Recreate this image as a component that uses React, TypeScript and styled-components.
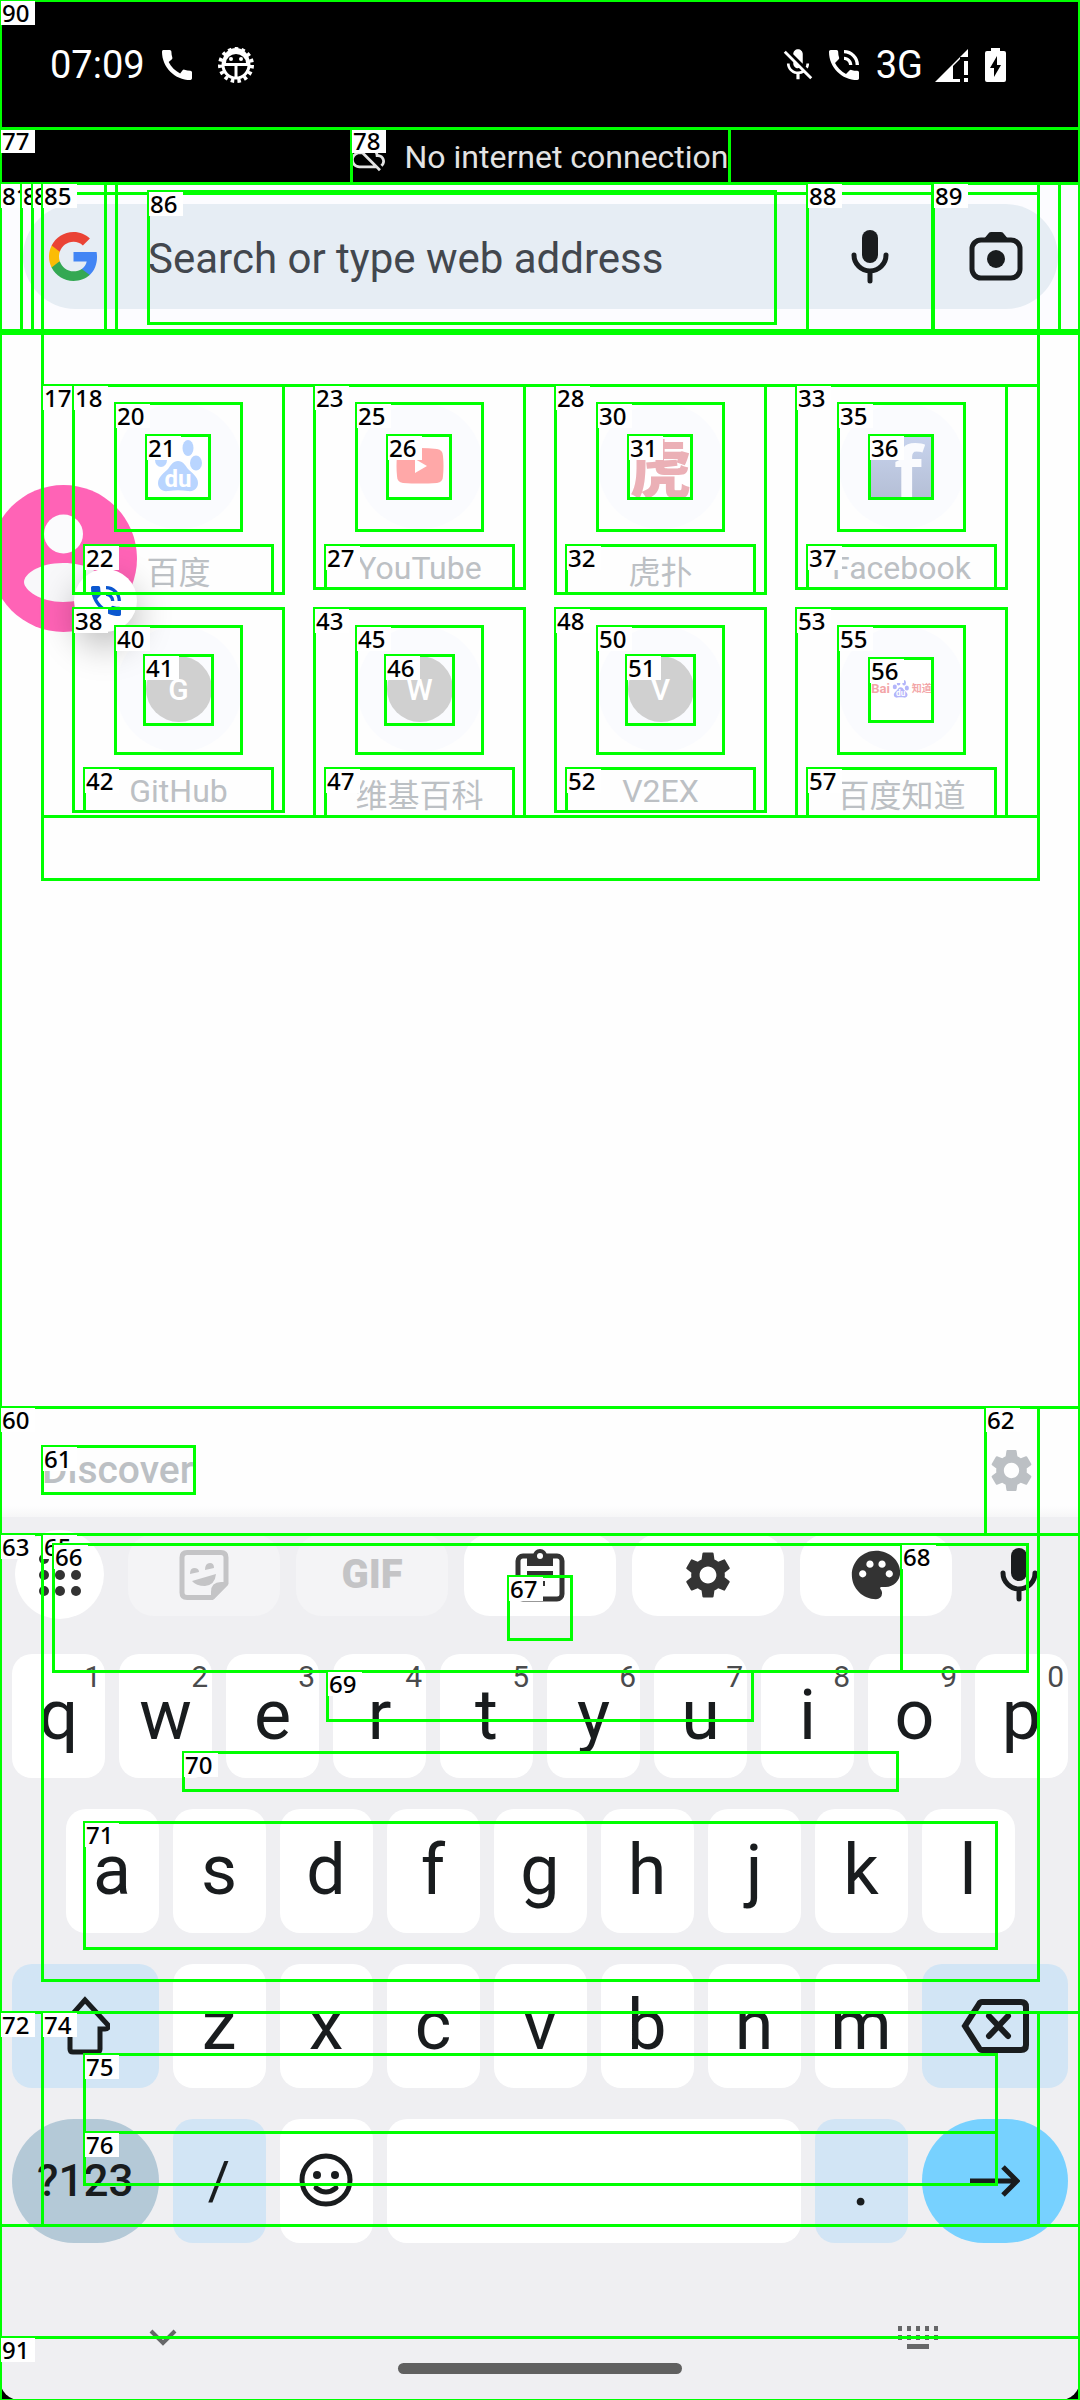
import React from "react";
import styled, { createGlobalStyle } from "styled-components";
import {
  MdCall,
  MdMicOff,
  MdPhoneInTalk,
  MdSettings,
  MdPalette,
  MdOutlineCloudOff,
} from "react-icons/md";

const SANS = `Roboto, "Noto Sans CJK SC", sans-serif`;

const GlobalStyle = createGlobalStyle`
  * { box-sizing: border-box; }
  body { margin: 0; background: #000; font-family: ${SANS}; }
  button { border: 0; padding: 0; background: none; font: inherit; color: inherit; cursor: pointer; }
  svg { display: block; flex: none; }
`;

const Page = styled.div`
  position: relative;
  display: flex;
  flex-direction: column;
  min-height: 100vh;
  overflow: hidden;
`;

/* Status bar */
const StatusBar = styled.header`
  display: flex;
  align-items: center;
  justify-content: space-between;
  height: 128px;
  padding: 2px 74px 0 50px;
  background: #000;
  color: #fff;
  font-size: 38px;
  line-height: 44px;
`;
const StatusGroup = styled.div<{ $gap: number }>`
  display: flex;
  align-items: center;
  gap: ${(p) => p.$gap}px;
`;
const OfflineBar = styled.div`
  display: flex;
  align-items: center;
  justify-content: center;
  gap: 19px;
  height: 55px;
  padding-top: 2px;
  background: #000;
  color: #e3e3e3;
  font-size: 32px;
  line-height: 40px;
`;

/* Search header */
const Header = styled.div`
  display: flex;
  align-items: flex-start;
  height: 150px;
  padding: 21px 22px 0 23px;
  background: #fcfcff;
`;
const Omnibox = styled.form`
  display: flex;
  align-items: center;
  flex: 1;
  height: 105px;
  padding: 0 35px 0 26px;
  border-radius: 53px;
  background: #e6edf4;
  color: #191c1e;
`;
const SearchInput = styled.input`
  flex: 1;
  min-width: 0;
  height: 100%;
  margin-left: 50px;
  padding: 3px 0 0;
  border: 0;
  outline: 0;
  background: transparent;
  color: #42474e;
  font-family: ${SANS};
  font-size: 42px;
  &::placeholder { color: #42474e; opacity: 1; }
`;
const IconButton = styled.button<{ $wide?: boolean }>`
  display: flex;
  align-items: center;
  justify-content: ${(p) => (p.$wide ? "center" : "flex-end")};
  width: ${(p) => (p.$wide ? 126 : 90)}px;
  height: 100%;
`;

/* Content */
const Content = styled.main`
  position: relative;
  display: flex;
  flex-direction: column;
  flex: 1;
  background: #fefefe;
`;
const TileGrid = styled.nav`
  display: grid;
  grid-template-columns: repeat(4, 1fr);
  grid-auto-rows: 223px;
  padding: 70px 58px 0;
`;
const Tile = styled.a`
  display: flex;
  flex-direction: column;
  align-items: center;
  color: #bcc0c4;
  text-decoration: none;
`;
const TileCircle = styled.span`
  display: flex;
  align-items: center;
  justify-content: center;
  width: 126px;
  height: 126px;
  border-radius: 50%;
  background: #fafbfe;
`;
const TileIcon = styled.span`
  display: flex;
  align-items: center;
  justify-content: center;
  width: 64px;
  height: 64px;
  background: #fff;
`;
const Monogram = styled.span`
  display: flex;
  align-items: center;
  justify-content: center;
  width: 66px;
  height: 66px;
  border-radius: 50%;
  background: #d0d0d0;
  color: #fff;
  font-size: 30px;
  font-weight: 500;
`;
const TigerMark = styled.span`
  color: #ebb0b6;
  font-family: "Noto Sans CJK SC", sans-serif;
  font-size: 62px;
  font-weight: 900;
  line-height: 64px;
`;
const ZhidaoMark = styled.span`
  display: flex;
  align-items: center;
  color: #f3a6a8;
  font-size: 13px;
  font-weight: 700;
  line-height: 16px;
`;
const ZhidaoText = styled.span`
  font-size: 10px;
`;
const TileLabel = styled.span<{ $cjk: boolean }>`
  margin-top: 16px;
  font-size: 32px;
  line-height: ${(p) => (p.$cjk ? 56 : 46)}px;
  white-space: nowrap;
`;
const DiscoverRow = styled.section`
  display: flex;
  align-items: center;
  justify-content: space-between;
  height: 110px;
  margin-top: auto;
  padding: 16px 43px 0 42px;
  background: linear-gradient(#fefefe 90%, #f6f6f7);
  color: #bcc0c4;
`;
const DiscoverTitle = styled.h2`
  margin: 0;
  font-size: 39px;
  font-weight: 500;
  line-height: 44px;
`;

/* Floating caller bubble, half off the left edge */
const Bubble = styled.div`
  position: absolute;
  left: -10px;
  top: 152px;
  width: 147px;
  height: 147px;
`;
const BubbleBadge = styled.span`
  position: absolute;
  right: 0;
  bottom: 0;
  display: flex;
  align-items: center;
  justify-content: center;
  width: 63px;
  height: 63px;
  border-radius: 50%;
  background: #fff;
  color: #0b57d0;
  box-shadow: 0 14px 36px rgba(0, 0, 0, 0.28);
`;

/* Keyboard */
const Keyboard = styled.section`
  padding: 13px 0 26px;
  border-radius: 0 0 20px 20px;
  background: #efeff2;
  color: #191c1e;
`;
const Toolbar = styled.div`
  display: flex;
  align-items: center;
  gap: 16px;
  padding: 0 10px 0 15px;
  color: #333;
`;
const AppsButton = styled.button`
  display: flex;
  align-items: center;
  justify-content: center;
  width: 89px;
  height: 89px;
  margin-right: 8px;
  border-radius: 50%;
  background: #fff;
`;
const ToolButton = styled.button`
  display: flex;
  align-items: center;
  justify-content: center;
  flex: 1;
  height: 82px;
  border-radius: 26px;
  background: #fff;
  font-size: 40px;
  font-weight: 900;
  &:disabled { background: #f4f4f6; color: #c4c4c6; }
`;
const VoiceButton = styled.button`
  display: flex;
  align-items: center;
  justify-content: center;
  width: 102px;
  height: 82px;
  color: #191c1e;
`;
const Keys = styled.div`
  display: grid;
  grid-template-columns: repeat(20, minmax(0, 1fr));
  grid-auto-rows: 124px;
  gap: 31px 14px;
  padding: 35px 12px 0;
`;
const keyColors = { plain: "#fff", soft: "#d2e5f5", dim: "#b4c9d7", go: "#77d1ff" };
type KeyTone = keyof typeof keyColors;
const Key = styled.button<{ $tone: KeyTone; $span: number; $start?: number; $size?: number }>`
  position: relative;
  display: flex;
  align-items: center;
  justify-content: center;
  grid-column: ${(p) => p.$start ?? "auto"} / span ${(p) => p.$span};
  padding-bottom: ${(p) => (p.$tone === "plain" ? 3 : 0)}px;
  border-radius: ${(p) => (p.$tone === "dim" || p.$tone === "go" ? 62 : 20)}px;
  background: ${(p) => keyColors[p.$tone]};
  font-size: ${(p) => p.$size ?? 70}px;
  font-weight: ${(p) => (p.$tone === "dim" ? 500 : 400)};
  line-height: 82px;
`;
const Hint = styled.span`
  position: absolute;
  top: 7px;
  right: 4px;
  color: #4a4b4d;
  font-size: 30px;
  font-weight: 400;
  line-height: 32px;
`;
const NavRow = styled.div`
  display: flex;
  justify-content: space-between;
  padding: 80px 141px 0 149px;
  color: #666769;
`;
const HomeBar = styled.div`
  width: 284px;
  height: 11px;
  margin: 12px auto 0;
  border-radius: 6px;
  background: #606060;
`;

/* Element outlines with their index numbers */
const OutlineLayer = styled.div`
  position: absolute;
  inset: 0;
  overflow: hidden;
  pointer-events: none;
`;
const Outline = styled.div`
  position: absolute;
  border: 3px solid #00ff00;
`;
const OutlineTag = styled.span`
  position: absolute;
  left: -1px;
  top: -1px;
  width: 34px;
  height: 24px;
  padding-left: 1px;
  background: #fff;
  color: #000;
  font-family: "Noto Sans", sans-serif;
  font-size: 24px;
  font-weight: 500;
  line-height: 24px;
`;

type Box = [string, number, number, number, number];

const columns = [0, 241, 482, 723];
const tileBoxes = (first: number, row: number): Box[] =>
  columns.flatMap((dx, i) => {
    const n = first + i * 5;
    const dy = row * 223;
    const letter = row === 1 && i < 3;
    const cjk = row === 0 ? i === 0 || i === 2 : i === 1 || i === 3;
    const bottom = (cjk ? 593 : 588) + dy;
    const icon: Box = letter
      ? [`${n + 3}`, 144 + dx, 655, 213 + dx, 724]
      : [`${n + 3}`, 146 + dx, 435 + dy, 210 + dx, 498 + dy];
    return [
      [`${n}`, 73 + dx, 385 + dy, 284 + dx, bottom],
      [`${n + 2}`, 115 + dx, 403 + dy, 242 + dx, 530 + dy],
      icon,
      [`${n + 4}`, 84 + dx, 545 + dy, 273 + dx, bottom],
    ] as Box[];
  });

const boxes: Box[] = [
  ["", 0, 0, 1080, 2400],
  ["", 0, 333, 1080, 2400],
  ["", 42, 193, 1039, 879],
  ["17", 42, 385, 1039, 816],
  ...tileBoxes(18, 0),
  ...tileBoxes(38, 1),
  ["60", 0, 1407, 1080, 1534],
  ["61", 42, 1446, 195, 1493],
  ["62", 985, 1407, 1039, 1534],
  ["63", 0, 1534, 1080, 2012],
  ["65", 42, 1534, 1039, 1980],
  ["66", 53, 1544, 1028, 1671],
  ["67", 508, 1576, 572, 1639],
  ["68", 901, 1544, 1028, 1671],
  ["69", 327, 1671, 753, 1720],
  ["70", 183, 1752, 898, 1790],
  ["71", 84, 1822, 997, 1948],
  ["72", 0, 2012, 1080, 2225],
  ["74", 42, 2012, 1039, 2225],
  ["75", 84, 2054, 997, 2132],
  ["76", 84, 2132, 997, 2184],
  ["77", 0, 128, 1080, 183],
  ["78", 351, 128, 730, 183],
  ["81", 0, 183, 1080, 330],
  ["82", 21, 183, 1060, 330],
  ["83", 32, 183, 1039, 330],
  ["85", 42, 183, 106, 330],
  ["", 116, 183, 1039, 330],
  ["86", 148, 191, 776, 323],
  ["88", 807, 183, 933, 330],
  ["89", 933, 183, 1039, 330],
  ["90", 0, 0, 1080, 128],
  ["91", 0, 2337, 1080, 2400],
];

const GoogleLogo = () => (
  <svg width="49" height="49" viewBox="1 1 22 22" aria-hidden="true">
    <path fill="#4285F4" d="M22.56 12.25c0-.78-.07-1.53-.2-2.25H12v4.26h5.92c-.26 1.37-1.04 2.53-2.21 3.31v2.77h3.57c2.08-1.92 3.28-4.74 3.28-8.09z" />
    <path fill="#34A853" d="M12 23c2.97 0 5.46-.98 7.28-2.66l-3.57-2.77c-.98.66-2.23 1.06-3.71 1.06-2.86 0-5.29-1.93-6.16-4.53H2.18v2.84C3.99 20.53 7.7 23 12 23z" />
    <path fill="#FBBC05" d="M5.84 14.09c-.22-.66-.35-1.36-.35-2.09s.13-1.43.35-2.09V7.07H2.18C1.43 8.55 1 10.22 1 12s.43 3.45 1.18 4.93l2.85-2.22.81-.62z" />
    <path fill="#EA4335" d="M12 5.38c1.62 0 3.06.56 4.21 1.64l3.15-3.15C17.45 2.09 14.97 1 12 1 7.7 1 3.99 3.47 2.18 7.07l3.66 2.84c.87-2.6 3.3-4.53 6.16-4.53z" />
  </svg>
);

const MicIcon = () => (
  <svg width="38" height="54" viewBox="0 0 38 54" aria-hidden="true">
    <rect x="11" y="0" width="16" height="33" rx="8" fill="currentColor" />
    <path d="M3 25a16 16 0 0 0 32 0M19 41v10" fill="none" stroke="currentColor" strokeWidth="5" strokeLinecap="round" />
  </svg>
);

const CameraIcon = () => (
  <svg width="54" height="50" viewBox="0 0 54 50" aria-hidden="true">
    <path d="M14 8l5-6q1-2 3-2h10q2 0 3 2l5 6z" fill="currentColor" />
    <rect x="3" y="8" width="48" height="38" rx="9" fill="none" stroke="currentColor" strokeWidth="5" />
    <circle cx="27" cy="27" r="9" fill="currentColor" />
  </svg>
);

const BugGearIcon = () => (
  <svg width="38" height="38" viewBox="0 0 38 38" aria-hidden="true">
    <circle cx="19" cy="19" r="13" fill="none" stroke="#fff" strokeWidth="3" />
    <circle cx="19" cy="19" r="16" fill="none" stroke="#fff" strokeWidth="4" strokeDasharray="3.4 3.3" />
    <path d="M6 15a13 13 0 0 1 26 0v5H6z" fill="#fff" />
    <path d="M9 17a10 9 0 0 1 20 0z" fill="#000" />
    <path d="M19 19v13" stroke="#fff" strokeWidth="3" />
    <circle cx="14" cy="13" r="2" fill="#fff" />
    <circle cx="24" cy="13" r="2" fill="#fff" />
  </svg>
);

const SignalIcon = () => (
  <svg width="34" height="34" viewBox="0 0 34 34" aria-hidden="true">
    <path d="M0 34L33 1v8H25v2L18 18v16z" fill="#fff" />
    <path d="M18 31h7v3h-7zM29 13h4v14h-4zM29 30h4v4h-4z" fill="#fff" />
  </svg>
);

const BatteryIcon = () => (
  <svg width="21" height="34" viewBox="0 0 21 34" aria-hidden="true">
    <path d="M6 0h9v3h4q2 0 2 2v27q0 2-2 2H2q-2 0-2-2V5q0-2 2-2h4z" fill="#fff" />
    <path d="M12 8L5 20h4v9l7-12h-4z" fill="#000" />
  </svg>
);

const Paw = ({ size, color, letters }: { size: number; color: string; letters: string }) => (
  <svg width={size} height={size} viewBox="0 0 64 64" aria-hidden="true">
    <g fill={color}>
      <ellipse cx="14" cy="26" rx="6" ry="7" />
      <ellipse cx="25" cy="14" rx="5.5" ry="8" />
      <ellipse cx="41" cy="14" rx="5.5" ry="8" />
      <ellipse cx="49" cy="29" rx="6" ry="7.5" />
      <path d="M31 27c5 0 7 4 10 8 4 4 10 8 10 14 0 5-4 9-10 8-7-1-13-1-20 0-6 1-10-3-10-8 0-6 6-10 10-14 3-4 5-8 10-8z" />
    </g>
    <text x="31" y="53" textAnchor="middle" fill="#fff" fontFamily="Roboto, sans-serif" fontWeight="700" fontSize="24">
      {letters}
    </text>
  </svg>
);

const YouTubeMark = () => (
  <svg width="48" height="36" viewBox="0 0 48 36" aria-hidden="true">
    <path d="M7 1Q24-1 41 1q6 1 6 7 1 10 0 20 0 6-6 7-17 1-34 0-6-1-6-7-1-10 0-20 0-6 6-7z" fill="#ffa8a8" />
    <path d="M19 11v14l12-7z" fill="#fff" />
  </svg>
);

const FacebookMark = () => (
  <svg width="64" height="64" viewBox="0 0 64 64" aria-hidden="true">
    <defs>
      <linearGradient id="fb" x1="0" y1="0" x2="0" y2="1">
        <stop offset="0" stopColor="#c8d4ee" />
        <stop offset="1" stopColor="#b5bfd6" />
      </linearGradient>
    </defs>
    <rect width="64" height="64" fill="url(#fb)" />
    <text x="24" y="64" fill="#fafbfe" fontFamily="Open Sans, sans-serif" fontWeight="700" fontSize="72">f</text>
  </svg>
);

const AvatarArt = () => (
  <svg width="147" height="147" viewBox="0 0 147 147" aria-hidden="true">
    <circle cx="73.500" cy="73.500" r="73.500" fill="#ff63b6" />
    <circle cx="73.500" cy="49" r="19.500" fill="#fbfbfd" />
    <path d="M73 78c24 0 39 10 39 19s-16 20-39 20-39-12-39-20 15-19 39-19z" fill="#f8f8fa" />
  </svg>
);

const DotsIcon = () => (
  <svg width="42" height="42" viewBox="0 0 42 42" aria-hidden="true">
    {[5, 21, 37].map((y) => [5, 21, 37].map((x) => <circle key={`${x}-${y}`} cx={x} cy={y} r="5" fill="currentColor" />))}
  </svg>
);

const StickerIcon = () => (
  <svg width="50" height="50" viewBox="0 0 50 50" aria-hidden="true">
    <path d="M8 2.500h34q5 0 5 5V33L33 47.500H8q-5 0-5-5v-35q0-5 5-5z" fill="none" stroke="currentColor" strokeWidth="5" />
    <path d="M49 32v3L35 49h-3v-7q0-10 10-10zM11 24q0-6 4-6 5 0 5 4zM26 20q0-7 5-7 4 0 4 5zM13 31l24-7q-1 11-11 12-9 0-13-5z" fill="currentColor" />
  </svg>
);

const ClipboardIcon = () => (
  <svg width="50" height="54" viewBox="0 0 50 54" aria-hidden="true">
    <rect x="3" y="8" width="44" height="43" rx="5" fill="none" stroke="currentColor" strokeWidth="5" />
    <path d="M12 8h6a7 7 0 0 1 14 0h6v10H12zM12 23h26v5H12zM12 33h18v5H12z" fill="currentColor" />
    <circle cx="25" cy="8" r="3" fill="#fff" />
  </svg>
);

const ShiftIcon = () => (
  <svg width="50" height="60" viewBox="0 0 50 60" aria-hidden="true">
    <path d="M25 4L3 29q-2 4 2 4h5v20q0 3 3 3h24q3 0 3-3V33h5q4 0 3-4z" fill="none" stroke="currentColor" strokeWidth="5" />
  </svg>
);

const BackspaceIcon = () => (
  <svg width="68" height="54" viewBox="0 0 68 54" aria-hidden="true">
    <path d="M21 3h39q5 0 5 5v38q0 5-5 5H21q-2 0-3-2L4 27 18 5q1-2 3-2z" fill="none" stroke="currentColor" strokeWidth="6" />
    <path d="M28 17l19 20M47 17L28 37" stroke="currentColor" strokeWidth="6" strokeLinecap="round" />
  </svg>
);

const SmileIcon = () => (
  <svg width="54" height="54" viewBox="0 0 54 54" aria-hidden="true">
    <circle cx="27" cy="27" r="24" fill="none" stroke="currentColor" strokeWidth="5" />
    <circle cx="18" cy="22" r="4" fill="currentColor" />
    <circle cx="36" cy="22" r="4" fill="currentColor" />
    <path d="M17 35q10 8 20 0" fill="none" stroke="currentColor" strokeWidth="5" strokeLinecap="round" />
  </svg>
);

const GoIcon = () => (
  <svg width="50" height="32" viewBox="0 0 50 32" aria-hidden="true">
    <path d="M0 16h46M33 2l14 14-14 14" fill="none" stroke="currentColor" strokeWidth="5" />
  </svg>
);

const ChevronIcon = () => (
  <svg width="28" height="28" viewBox="0 0 28 28" aria-hidden="true">
    <path d="M2 8l12 12L26 8" fill="none" stroke="currentColor" strokeWidth="4" />
  </svg>
);

const LayoutIcon = () => (
  <svg width="42" height="28" viewBox="0 0 42 28" aria-hidden="true">
    {[3, 12].map((y) => [1, 10, 19, 28, 37].map((x) => <rect key={`${x}-${y}`} x={x} y={y} width="4" height="5" fill="currentColor" />))}
    <rect x="10" y="21" width="22" height="5" fill="currentColor" />
  </svg>
);

const tiles: { label: string; cjk: boolean; icon: React.ReactNode }[] = [
  { label: "百度", cjk: true, icon: <TileIcon><Paw size={64} color="#b9d5ff" letters="du" /></TileIcon> },
  { label: "YouTube", cjk: false, icon: <TileIcon><YouTubeMark /></TileIcon> },
  { label: "虎扑", cjk: true, icon: <TileIcon><TigerMark>虎</TigerMark></TileIcon> },
  { label: "Facebook", cjk: false, icon: <TileIcon><FacebookMark /></TileIcon> },
  { label: "GitHub", cjk: false, icon: <Monogram>G</Monogram> },
  { label: "维基百科", cjk: true, icon: <Monogram>W</Monogram> },
  { label: "V2EX", cjk: false, icon: <Monogram>V</Monogram> },
  {
    label: "百度知道",
    cjk: true,
    icon: (
      <TileIcon>
        <ZhidaoMark>
          Bai
          <Paw size={22} color="#b3b5fa" letters="du" />
          <ZhidaoText>知道</ZhidaoText>
        </ZhidaoMark>
      </TileIcon>
    ),
  },
];

export default function App() {
  return (
    <Page>
      <GlobalStyle />
      <StatusBar>
        <StatusGroup $gap={20}>
          <StatusGroup $gap={12}>
            <span>07:09</span>
            <MdCall size={40} />
          </StatusGroup>
          <BugGearIcon />
        </StatusGroup>
        <StatusGroup $gap={16}>
          <StatusGroup $gap={12}>
            <StatusGroup $gap={7}>
              <MdMicOff size={38} />
              <MdPhoneInTalk size={40} />
            </StatusGroup>
            <span>3G</span>
            <SignalIcon />
          </StatusGroup>
          <BatteryIcon />
        </StatusGroup>
      </StatusBar>
      <OfflineBar role="status">
        <MdOutlineCloudOff size={34} />
        <span>No internet connection</span>
      </OfflineBar>
      <Header>
        <Omnibox onSubmit={(e) => e.preventDefault()}>
          <GoogleLogo />
          <SearchInput type="text" aria-label="Search or type web address" placeholder="Search or type web address" />
          <IconButton type="button" $wide aria-label="Voice search"><MicIcon /></IconButton>
          <IconButton type="button" aria-label="Search with camera"><CameraIcon /></IconButton>
        </Omnibox>
      </Header>

      <Content>
        <TileGrid aria-label="Top sites">
          {tiles.map((t) => (
            <Tile key={t.label} href="#">
              <TileCircle>{t.icon}</TileCircle>
              <TileLabel $cjk={t.cjk}>{t.label}</TileLabel>
            </Tile>
          ))}
        </TileGrid>
        <DiscoverRow>
          <DiscoverTitle>Discover</DiscoverTitle>
          <button type="button" aria-label="Discover settings"><MdSettings size={51} /></button>
        </DiscoverRow>
        <Bubble>
          <AvatarArt />
          <BubbleBadge><MdPhoneInTalk size={40} /></BubbleBadge>
        </Bubble>
      </Content>

      <Keyboard aria-label="Keyboard">
        <Toolbar>
          <AppsButton type="button" aria-label="More tools"><DotsIcon /></AppsButton>
          <ToolButton type="button" disabled aria-label="Stickers"><StickerIcon /></ToolButton>
          <ToolButton type="button" disabled>GIF</ToolButton>
          <ToolButton type="button" aria-label="Clipboard"><ClipboardIcon /></ToolButton>
          <ToolButton type="button" aria-label="Settings"><MdSettings size={56} /></ToolButton>
          <ToolButton type="button" aria-label="Themes"><MdPalette size={58} /></ToolButton>
          <VoiceButton type="button" aria-label="Voice typing"><MicIcon /></VoiceButton>
        </Toolbar>
        <Keys>
          {[..."qwertyuiop"].map((c, i) => (
            <Key key={c} type="button" $tone="plain" $span={2}>
              {c}
              <Hint>{(i + 1) % 10}</Hint>
            </Key>
          ))}
          {[..."asdfghjkl"].map((c, i) => (
            <Key key={c} type="button" $tone="plain" $span={2} $start={i === 0 ? 2 : undefined}>{c}</Key>
          ))}
          <Key type="button" $tone="soft" $span={3} $start={1} aria-label="Shift"><ShiftIcon /></Key>
          {[..."zxcvbnm"].map((c) => (
            <Key key={c} type="button" $tone="plain" $span={2}>{c}</Key>
          ))}
          <Key type="button" $tone="soft" $span={3} aria-label="Backspace"><BackspaceIcon /></Key>
          <Key type="button" $tone="dim" $span={3} $size={44}>?123</Key>
          <Key type="button" $tone="soft" $span={2} $size={54}>/</Key>
          <Key type="button" $tone="plain" $span={2} aria-label="Emoji"><SmileIcon /></Key>
          <Key type="button" $tone="plain" $span={8} aria-label="Space" />
          <Key type="button" $tone="soft" $span={2}>.</Key>
          <Key type="button" $tone="go" $span={3} aria-label="Go"><GoIcon /></Key>
        </Keys>
        <NavRow>
          <button type="button" aria-label="Hide keyboard"><ChevronIcon /></button>
          <button type="button" aria-label="Switch keyboard"><LayoutIcon /></button>
        </NavRow>
        <HomeBar />
      </Keyboard>

      <OutlineLayer aria-hidden="true">
        {boxes.map(([tag, x1, y1, x2, y2], i) => (
          <Outline key={i} style={{ left: x1 - 1, top: y1 - 1, width: x2 - x1 + 2, height: y2 - y1 + 3 }}>
            {tag && <OutlineTag>{tag}</OutlineTag>}
          </Outline>
        ))}
      </OutlineLayer>
    </Page>
  );
}
